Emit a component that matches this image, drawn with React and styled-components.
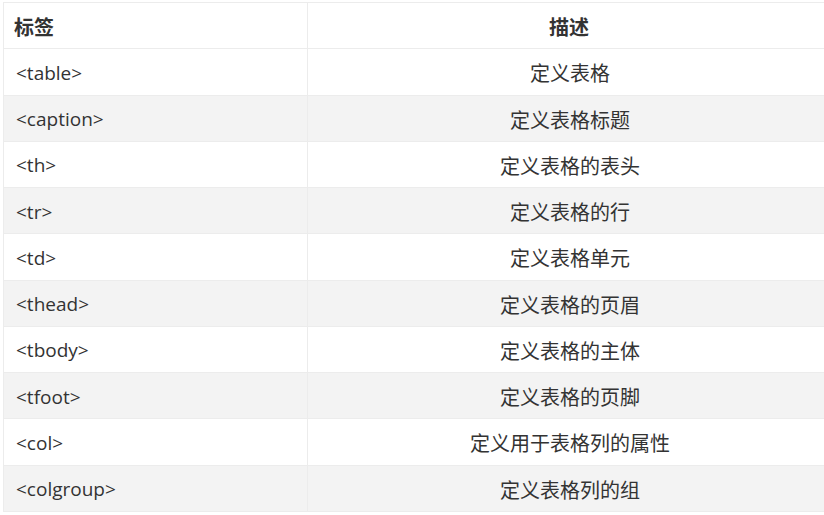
import React from 'react';
import styled, { createGlobalStyle } from 'styled-components';

const GlobalStyle = createGlobalStyle`
  html, body {
    margin: 0;
    padding: 0;
    background: #fff;
    overflow: hidden;
  }
`;

const Page = styled.div`
  padding: 2px 0 0 3px;
  width: 824px;
  height: 515px;
  box-sizing: border-box;
  overflow: hidden;
`;

const Table = styled.table`
  width: 830px;
  border-collapse: collapse;
  table-layout: fixed;
  color: #333;
  font-family: 'Noto Sans CJK SC', sans-serif;
`;

const Row = styled.tr`
  height: 46.25px;
  background: ${(p) => (p.$striped ? '#f3f3f3' : '#fff')};
`;

const Head = styled.th`
  border: 1px solid #ececec;
  font-size: 20px;
  font-weight: 700;
  padding: 2px 12px 0 10px;
  text-align: ${(p) => (p.$center ? 'center' : 'left')};
  vertical-align: middle;
`;

const TagCell = styled.td`
  border: 1px solid #ececec;
  padding: 2px 12px 0;
  font-family: 'Open Sans', 'Noto Sans CJK SC', sans-serif;
  font-size: 19px;
  vertical-align: middle;
`;

const DescCell = styled.td`
  border: 1px solid #ececec;
  padding: 2px 12px 0;
  font-size: 20px;
  text-align: center;
  vertical-align: middle;
`;

const rows = [
  ['<table>', '定义表格'],
  ['<caption>', '定义表格标题'],
  ['<th>', '定义表格的表头'],
  ['<tr>', '定义表格的行'],
  ['<td>', '定义表格单元'],
  ['<thead>', '定义表格的页眉'],
  ['<tbody>', '定义表格的主体'],
  ['<tfoot>', '定义表格的页脚'],
  ['<col>', '定义用于表格列的属性'],
  ['<colgroup>', '定义表格列的组'],
];

const App = () => {
  return (
    <Page>
      <GlobalStyle />
      <Table>
        <colgroup>
          <col style={{ width: '304px' }} />
          <col />
        </colgroup>
        <thead>
          <Row>
            <Head>标签</Head>
            <Head $center>描述</Head>
          </Row>
        </thead>
        <tbody>
          {rows.map(([tag, desc], i) => (
            <Row key={tag} $striped={i % 2 === 1}>
              <TagCell>{tag}</TagCell>
              <DescCell>{desc}</DescCell>
            </Row>
          ))}
        </tbody>
      </Table>
    </Page>
  );
};

export default App;
